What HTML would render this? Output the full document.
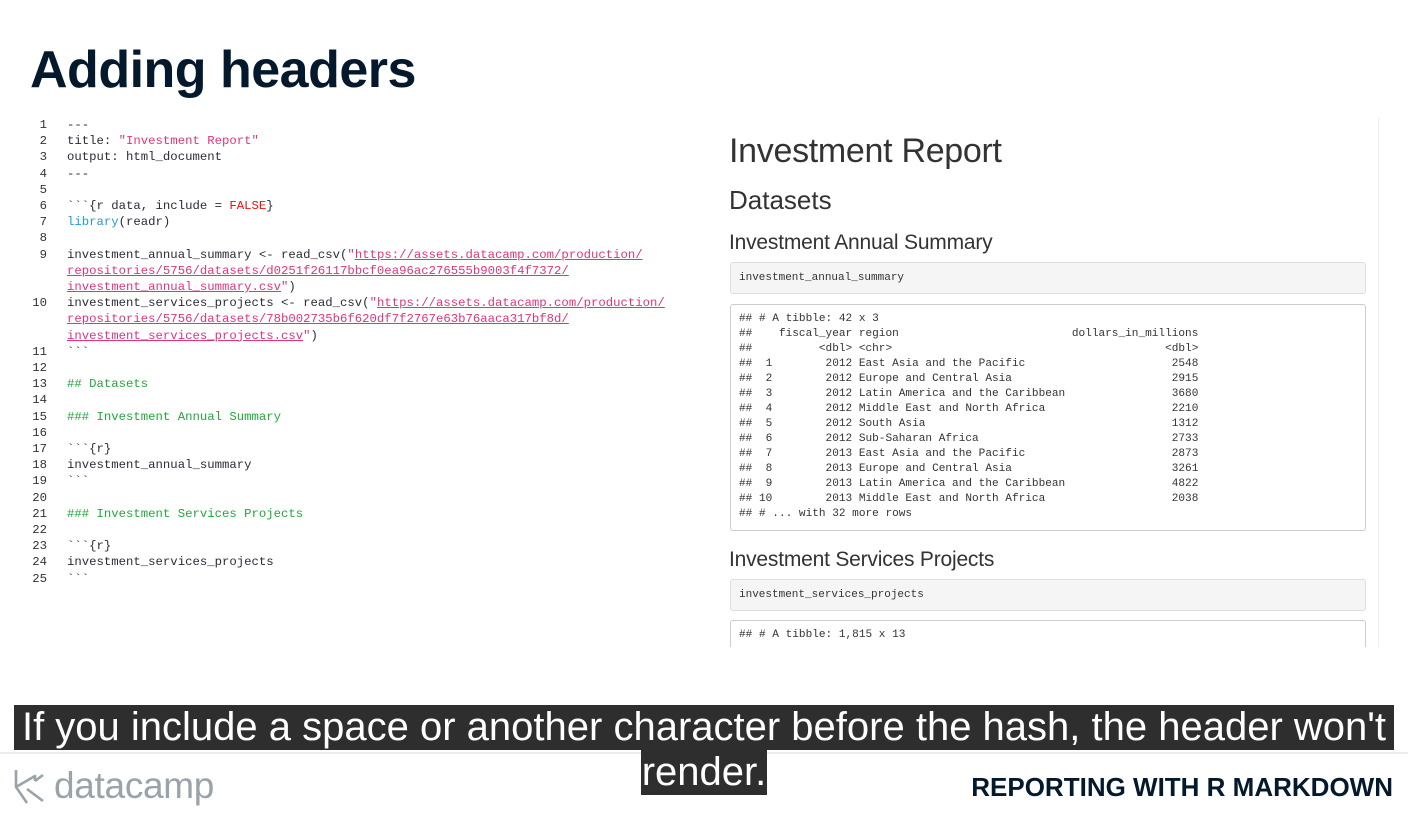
<!DOCTYPE html>
<html><head><meta charset="utf-8"><style>
*{margin:0;padding:0;box-sizing:border-box}
body{width:1408px;height:817px;background:#fff;position:relative;overflow:hidden;font-family:"Liberation Sans",sans-serif}
.abs{position:absolute}
h1.t{position:absolute;left:30px;top:40px;font-size:52px;font-weight:700;color:#05192d;letter-spacing:-0.5px}
.code{position:absolute;left:0;top:117px;font-family:"Liberation Mono",monospace;font-size:12.3px;line-height:16.2px;color:#2b2b3a}
.code .r{display:flex}
.code .n{width:47px;text-align:right;color:#333;padding-right:0}
.code .c{padding-left:20px;white-space:pre}
.s{color:#e0357a}
.u{color:#e0357a;text-decoration:underline;text-decoration-color:#e0357a}
.g{color:#1fa93a}
.b{color:#1e9ad6}
.f{color:#f01010}
.panel{position:absolute;left:712px;top:118px;width:667px;height:530px;border-right:1px solid #eee}
.rh1{position:absolute;left:729px;top:132px;font-size:34px;color:#333;letter-spacing:-0.3px}
.rh2{position:absolute;left:729px;top:185px;font-size:26px;color:#333}
.rh3{position:absolute;left:729px;top:231px;font-size:21px;color:#333;letter-spacing:-0.2px}
.box{position:absolute;left:730px;width:636px;background:#f5f5f5;border:1px solid #ddd;border-radius:3px;font-family:"Liberation Mono",monospace;font-size:11px;color:#333;padding-left:8px}
.out{position:absolute;left:730px;width:636px;background:#fff;border:1px solid #ccc;border-radius:3px;font-family:"Liberation Mono",monospace;font-size:11.1px;line-height:15px;color:#333;padding:7px 0 0 8px;white-space:pre}
.sub{position:absolute;background:#2e2e2e;color:#fff;font-size:40px;line-height:45px;white-space:nowrap;padding:0}
</style></head><body>
<h1 class="t">Adding headers</h1>
<div class="code">
<div class="r"><span class="n">1</span><span class="c">---</span></div>
<div class="r"><span class="n">2</span><span class="c">title: <span class="s">"Investment Report"</span></span></div>
<div class="r"><span class="n">3</span><span class="c">output: html_document</span></div>
<div class="r"><span class="n">4</span><span class="c">---</span></div>
<div class="r"><span class="n">5</span><span class="c"> </span></div>
<div class="r"><span class="n">6</span><span class="c">&#96;&#96;&#96;{r data, include = <span class="f">FALSE</span>}</span></div>
<div class="r"><span class="n">7</span><span class="c"><span class="b">library</span>(readr)</span></div>
<div class="r"><span class="n">8</span><span class="c"> </span></div>
<div class="r"><span class="n">9</span><span class="c">investment_annual_summary &lt;- read_csv(<span class="s">"</span><span class="u">https://assets.datacamp.com/production/</span></span></div>
<div class="r"><span class="n"></span><span class="c"><span class="u">repositories/5756/datasets/d0251f26117bbcf0ea96ac276555b9003f4f7372/</span></span></div>
<div class="r"><span class="n"></span><span class="c"><span class="u">investment_annual_summary.csv</span><span class="s">"</span>)</span></div>
<div class="r"><span class="n">10</span><span class="c">investment_services_projects &lt;- read_csv(<span class="s">"</span><span class="u">https://assets.datacamp.com/production/</span></span></div>
<div class="r"><span class="n"></span><span class="c"><span class="u">repositories/5756/datasets/78b002735b6f620df7f2767e63b76aaca317bf8d/</span></span></div>
<div class="r"><span class="n"></span><span class="c"><span class="u">investment_services_projects.csv</span><span class="s">"</span>)</span></div>
<div class="r"><span class="n">11</span><span class="c">&#96;&#96;&#96;</span></div>
<div class="r"><span class="n">12</span><span class="c"> </span></div>
<div class="r"><span class="n">13</span><span class="c"><span class="g">## Datasets</span></span></div>
<div class="r"><span class="n">14</span><span class="c"> </span></div>
<div class="r"><span class="n">15</span><span class="c"><span class="g">### Investment Annual Summary</span></span></div>
<div class="r"><span class="n">16</span><span class="c"> </span></div>
<div class="r"><span class="n">17</span><span class="c">&#96;&#96;&#96;{r}</span></div>
<div class="r"><span class="n">18</span><span class="c">investment_annual_summary</span></div>
<div class="r"><span class="n">19</span><span class="c">&#96;&#96;&#96;</span></div>
<div class="r"><span class="n">20</span><span class="c"> </span></div>
<div class="r"><span class="n">21</span><span class="c"><span class="g">### Investment Services Projects</span></span></div>
<div class="r"><span class="n">22</span><span class="c"> </span></div>
<div class="r"><span class="n">23</span><span class="c">&#96;&#96;&#96;{r}</span></div>
<div class="r"><span class="n">24</span><span class="c">investment_services_projects</span></div>
<div class="r"><span class="n">25</span><span class="c">&#96;&#96;&#96;</span></div>
</div>

<div class="panel"></div>
<div class="rh1">Investment Report</div>
<div class="rh2">Datasets</div>
<div class="rh3">Investment Annual Summary</div>
<div class="box" style="top:262px;height:32px;line-height:30px">investment_annual_summary</div>
<div class="out" style="top:304px;height:227px">## # A tibble: 42 x 3
##    fiscal_year region                          dollars_in_millions
##          &lt;dbl&gt; &lt;chr&gt;                                         &lt;dbl&gt;
##  1        2012 East Asia and the Pacific                      2548
##  2        2012 Europe and Central Asia                        2915
##  3        2012 Latin America and the Caribbean                3680
##  4        2012 Middle East and North Africa                   2210
##  5        2012 South Asia                                     1312
##  6        2012 Sub-Saharan Africa                             2733
##  7        2013 East Asia and the Pacific                      2873
##  8        2013 Europe and Central Asia                        3261
##  9        2013 Latin America and the Caribbean                4822
## 10        2013 Middle East and North Africa                   2038
## # ... with 32 more rows</div>
<div class="rh3" style="top:548px">Investment Services Projects</div>
<div class="box" style="top:579px;height:32px;line-height:30px">investment_services_projects</div>
<div class="out" style="top:620px;height:40px;border-bottom:none">## # A tibble: 1,815 x 13</div>
<div class="abs" style="left:700px;top:647px;width:708px;height:40px;background:#fff"></div>

<div class="abs" style="left:0;top:752px;width:1408px;height:2px;background:#ececec"></div>
<svg class="abs" style="left:13px;top:767px" width="34" height="40" viewBox="0 0 34 40"><path d="M3 3 V20 L22 9 L22 14 M3 20 L14 36 M22 14 L30 8 M14 22 L30 34" fill="none" stroke="#9aa2aa" stroke-width="2.6" stroke-linejoin="round"/></svg>
<div class="abs" style="left:54px;top:765px;font-size:37px;color:#9aa2aa;letter-spacing:-0.3px">datacamp</div>
<div class="abs" style="right:15px;top:772px;font-size:26px;font-weight:700;color:#05192d">REPORTING WITH R MARKDOWN</div>

<div class="sub" style="left:14px;top:705px;width:1380px;text-align:center">If you include a space or another character before the hash, the header won't</div>
<div class="sub" style="left:641px;top:750px;width:126px;text-align:center">render.</div>
</body></html>
